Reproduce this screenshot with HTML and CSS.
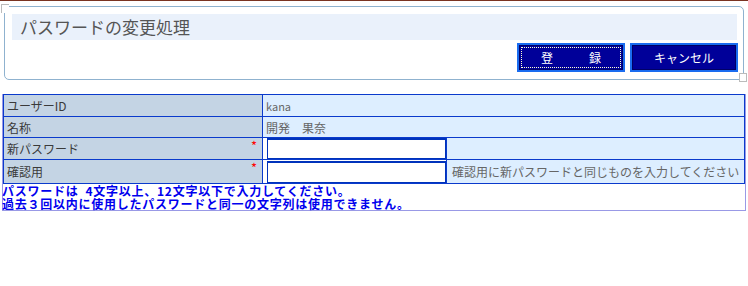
FILE: index.html
```html
<!DOCTYPE html>
<html lang="ja">
<head>
<meta charset="utf-8">
<title>パスワードの変更処理</title>
<link rel="stylesheet" href="styles.css">
</head>
<body>
<div class="topline"></div>
<div class="panel">
	<span class="corner corner-tl"></span>
	<div class="title">パスワードの変更処理</div>
	<div class="btns">
		<button class="btn focus" type="button">登　　　録</button>
		<button class="btn" type="button">キャンセル</button>
	</div>
	<span class="corner corner-br"></span>
</div>
<div class="formbox">
	<table class="form">
		<tr class="r1">
			<th>ユーザーID</th>
			<td colspan="2" class="small">kana</td>
		</tr>
		<tr class="r2">
			<th>名称</th>
			<td colspan="2">開発　果奈</td>
		</tr>
		<tr class="r3">
			<th>新パスワード<span class="req">*</span></th>
			<td class="inp"><input type="password"></td>
			<td class="hint"></td>
		</tr>
		<tr class="r4">
			<th>確認用<span class="req">*</span></th>
			<td class="inp"><input type="password"></td>
			<td class="hint">確認用に新パスワードと同じものを入力してください</td>
		</tr>
	</table>
	<p class="note">パスワードは&nbsp; 4文字以上、12文字以下で入力してください。<br>過去３回以内に使用したパスワードと同一の文字列は使用できません。</p>
</div>
</body>
</html>
```

FILE: styles.css
```css
*{ margin:0; padding:0; box-sizing:border-box;}
body{ background:#fff; font-family:"Noto Sans CJK JP","DejaVu Sans",sans-serif; font-size:12px; color:#444; width:748px;}
.topline{ height:1px; background:#7a3322;}
.panel{ position:relative; margin:5px 0 0 4px; width:740px; height:74px; border:1px solid #8fb2cf; border-radius:5px; padding:7px 6px 0 7px;}
.title{ height:26px; background:#eaf1fb; color:#555; font-size:17px; line-height:26px; padding-left:8px;}
.btns{ display:flex; justify-content:flex-end; gap:5px; margin-top:3px; margin-right:-1px;}
.btn{ width:108px; height:29px; background:#000099; color:#fff; border:2px solid #1a6cf0; box-shadow:inset 0 0 0 1px #000066; font-family:inherit; font-size:12px; line-height:23px;}
.btn.focus{ width:108px; outline:1px dotted #ffffcc; outline-offset:-5px;}
.corner{ position:absolute; width:8px; height:9px; border-left:1px solid #bbb; border-top:1px solid #bbb; background:#fff;}
.corner-tl{ left:-4px; top:-3px;}
.corner-br{ right:-4px; bottom:-3px; border:1px solid #bbb;}
.formbox{ margin:14px 0 0 2px; width:744px; border:1px solid #9999e6; border-top:none;}
.form{ width:742px; border-collapse:collapse; border:1px solid #0a3acc;}
.form th,.form td{ border:1px solid #0a3acc; padding:0 3px; text-align:left; font-weight:normal; white-space:nowrap;}
.form th{ width:259px; background:#c4d4e4; color:#3a3a3a; position:relative; vertical-align:middle;}
.form td{ background:#ddeeff; color:#666;}
.form td.small{ font-size:11px;}
.r1 th,.r1 td{ height:22px;}
.r2 th,.r2 td{ height:21px;}
.r3 th,.r3 td{ height:22px;}
.r4 th,.r4 td{ height:24px;}
.form td.inp{ width:184px; padding:0 0 0 4px; background:#fff;}
.form td.inp input{ display:block; width:179px; height:21px; border:1px solid #0033bb; border-top:2px solid #0033bb; outline:none;}
.r4 td.inp input{ height:22px;}
.form td.hint{ padding-left:5px;}
.req{ position:absolute; right:5px; top:0; color:#ff0000; font-size:13px; line-height:13px;}
.r3 .req,.r4 .req{ top:1px;}
.note{ color:#0000ee; font-weight:bold; font-size:12px; letter-spacing:0.75px; line-height:13px; margin-left:-1px;}
```
